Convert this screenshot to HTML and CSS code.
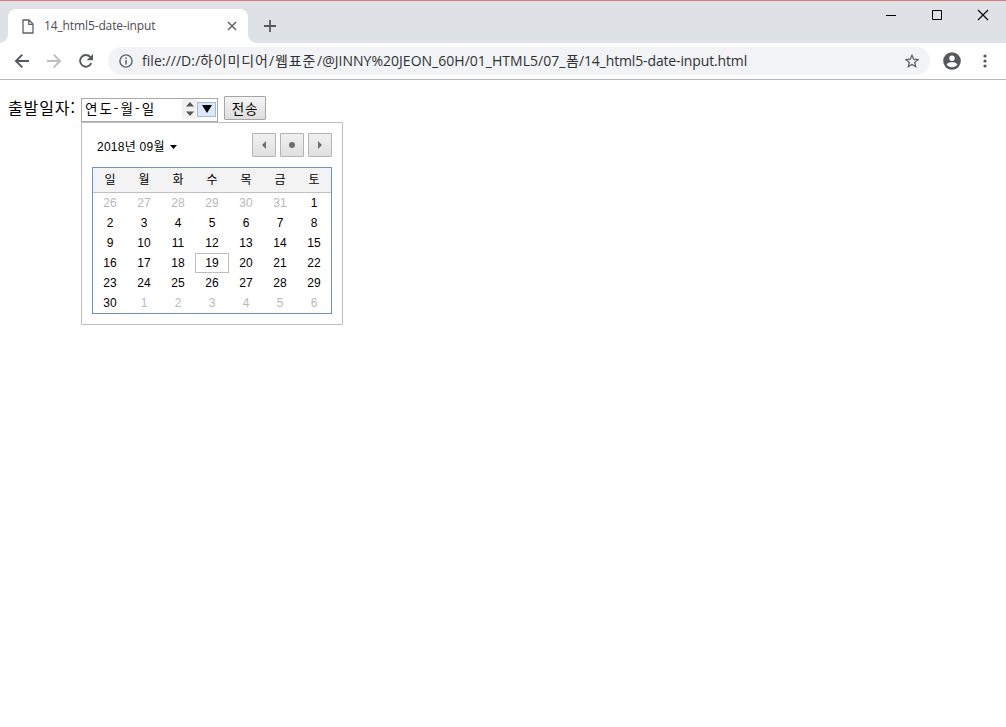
FILE: index.html
```html
<!DOCTYPE html>
<html lang="ko">
<head>
<meta charset="utf-8">
<title>14_html5-date-input</title>
<link rel="stylesheet" href="styles.css">
</head>
<body>
<div class="browser">
  <header class="tabstrip">
    <div class="tab">
      <svg class="tab-icon" width="12" height="15" viewBox="0 0 12 15" fill="none" stroke="#5f6368" stroke-width="1.3"><path d="M1 1h6l4 4v9H1zM6.8 1v4.3H11"/></svg>
      <span class="tab-title">14_html5-date-input</span>
      <svg class="tab-close" width="10" height="10" viewBox="0 0 10 10" stroke="#5f6368" stroke-width="1.5"><path d="M1 1l8 8M9 1L1 9"/></svg>
    </div>
    <svg class="new-tab" width="12" height="12" viewBox="0 0 12 12" stroke="#55595e" stroke-width="1.8"><path d="M6 0v12M0 6h12"/></svg>
    <div class="window-controls">
      <svg width="46" height="29" viewBox="0 0 46 29" stroke="#000"><path d="M18 14.5h10"/></svg>
      <svg width="46" height="29" viewBox="0 0 46 29" fill="none" stroke="#000"><path d="M18.5 9.5h9v9h-9z"/></svg>
      <svg width="46" height="29" viewBox="0 0 46 29" stroke="#000" stroke-width="1.1"><path d="M18 9l10 10M28 9L18 19"/></svg>
    </div>
  </header>
  <nav class="toolbar">
    <svg class="nav-icon" width="16" height="16" viewBox="0 0 16 16" fill="none" stroke="#55595e" stroke-width="1.9"><path d="M15 8H2.3M8.3 1.6L1.9 8l6.4 6.4"/></svg>
    <svg class="nav-icon" width="16" height="16" viewBox="0 0 16 16" fill="none" stroke="#bcbec1" stroke-width="1.9"><path d="M1 8h12.7M7.7 1.6L14.1 8l-6.4 6.4"/></svg>
    <svg class="nav-icon" width="16" height="16" viewBox="0 0 16 16"><path d="M13.2 10.2A5.8 5.8 0 1 1 12.3 4.1" fill="none" stroke="#55595e" stroke-width="1.9"/><path d="M15 1v6.3H8.7z" fill="#55595e"/></svg>
    <div class="omnibox">
      <svg width="14" height="14" viewBox="0 0 14 14"><circle cx="7" cy="7" r="6.1" fill="none" stroke="#5f6368" stroke-width="1.4"/><path d="M6.3 3.4h1.5v1.5H6.3zM6.3 6.1h1.5v4.5H6.3z" fill="#5f6368"/></svg>
      <div class="url"><span class="u-scheme">file:///D:/</span><span class="u-folder">하이미디어</span><span class="u-slash">/</span><span class="u-topic">웹표준</span><span class="u-path">/@JINNY%20JEON_60H/01_HTML5/07_</span><span class="u-form">폼</span><span class="u-file">/14_html5-date-input.html</span></div>
      <svg class="star" width="14" height="14" viewBox="0 0 14 14" fill="none" stroke="#5f6368" stroke-width="1.3"><path d="M7 1.3l1.7 3.9 4.2.4-3.2 2.8 1 4.2L7 10.4l-3.7 2.2 1-4.2L1.1 5.6l4.2-.4z"/></svg>
    </div>
    <svg class="avatar" width="18" height="18" viewBox="0 0 18 18"><circle cx="9" cy="9" r="8.8" fill="#55595e"/><circle cx="9" cy="6.2" r="2.7" fill="#fff"/><path d="M3.7 12.4C4.2 10.9 7 10.3 9 10.3s4.8.6 5.3 2.1C13.200 14.100 11.300 15.200 9 15.200s-4.200-1.100-5.300-2.800z" fill="#fff"/></svg>
    <svg class="kebab" width="4" height="14" viewBox="0 0 4 14" fill="#55595e"><circle cx="2" cy="2" r="1.6"/><circle cx="2" cy="7" r="1.6"/><circle cx="2" cy="12" r="1.6"/></svg>
  </nav>
  <main class="page">
    <form class="form">
      <label class="label">출발일자:</label>
      <div class="date-field">
        <span class="date-text">연도-월-일</span>
        <span class="spinner"><svg width="8" height="14" viewBox="0 0 8 14" fill="#555"><path d="M0 4.500L4 0l4 4.500zM0 9.500h8L4 14z"/></svg></span>
        <span class="dropdown"><svg width="10" height="8" viewBox="0 0 10 8"><path d="M0 0h10L5 8z"/></svg></span>
        <div class="picker">
          <div class="picker-head">
            <span class="month">2018년 09월</span>
            <svg class="caret" width="7" height="4" viewBox="0 0 7 4"><path d="M0 0h7L3.500 4z"/></svg>
            <div class="steps">
              <span class="step"><svg width="6" height="8" viewBox="0 0 6 8" fill="#6e6e6e"><path d="M5 0v8L1 4z"/></svg></span>
              <span class="step"><svg width="6" height="6" viewBox="0 0 6 6" fill="#6e6e6e"><circle cx="3" cy="3" r="3"/></svg></span>
              <span class="step"><svg width="6" height="8" viewBox="0 0 6 8" fill="#6e6e6e"><path d="M1 0v8l4-4z"/></svg></span>
            </div>
          </div>
          <div class="calendar">
            <div class="weekdays"><span>일</span><span>월</span><span>화</span><span>수</span><span>목</span><span>금</span><span>토</span></div>
            <div class="days">
              <span class="other">26</span><span class="other">27</span><span class="other">28</span><span class="other">29</span><span class="other">30</span><span class="other">31</span><span>1</span>
              <span>2</span><span>3</span><span>4</span><span>5</span><span>6</span><span>7</span><span>8</span>
              <span>9</span><span>10</span><span>11</span><span>12</span><span>13</span><span>14</span><span>15</span>
              <span>16</span><span>17</span><span>18</span><span class="today">19</span><span>20</span><span>21</span><span>22</span>
              <span>23</span><span>24</span><span>25</span><span>26</span><span>27</span><span>28</span><span>29</span>
              <span>30</span><span class="other">1</span><span class="other">2</span><span class="other">3</span><span class="other">4</span><span class="other">5</span><span class="other">6</span>
            </div>
          </div>
        </div>
      </div>
      <button class="submit" type="button">전송</button>
    </form>
  </main>
</div>
</body>
</html>
```
FILE: styles.css
```css
* { box-sizing: border-box; }
body { margin: 0; background: #fff; color: #000; font-family: "Liberation Sans", "Noto Sans CJK KR", sans-serif; }
svg { display: block; flex: none; }
.browser { width: 1006px; height: 727px; overflow: hidden; }

.tabstrip { height: 43px; display: flex; background: #dee1e6; border-top: 1px solid #d9787b; padding-left: 8px; }
.tab { position: relative; width: 240px; height: 34px; margin-top: 8px; padding: 0 11px 0 14px; display: flex; align-items: center; background: #fff; border-radius: 8px 8px 0 0; }
.tab::before, .tab::after { content: ""; position: absolute; bottom: 0; width: 8px; height: 8px; }
.tab::before { left: -8px; background: radial-gradient(circle at 0 0, transparent 7.5px, #fff 8px); }
.tab::after { right: -8px; background: radial-gradient(circle at 100% 0, transparent 7.5px, #fff 8px); }
.tab-title { margin-left: 10px; font: 12px/16px "Open Sans", sans-serif; letter-spacing: -0.12px; color: #4a4d51; white-space: nowrap; }
.tab-close { margin-left: auto; }
.new-tab { margin: 19px 0 0 16px; }
.window-controls { display: flex; margin-left: auto; }

.toolbar { height: 37px; display: flex; align-items: center; padding: 0 19px 0 14px; border-bottom: 1px solid #b4b6b9; }
.nav-icon { margin-right: 16px; }
.omnibox { width: 822px; height: 28px; margin-left: -2px; padding: 0 11px; display: flex; align-items: center; background: #f1f3f4; border-radius: 14px; }
.url { display: flex; margin-left: 9px; font: 14px/20px "Open Sans", "Noto Sans CJK KR", sans-serif; color: #303236; white-space: nowrap; }
.url span { flex: none; }
.u-scheme { width: 58px; letter-spacing: 0.05px; }
.u-folder { width: 69px; letter-spacing: 0.9px; }
.u-slash { width: 6px; }
.u-topic { width: 42px; letter-spacing: 0.9px; }
.u-path { width: 249px; letter-spacing: 0.02px; }
.u-form { width: 13px; }
.u-file { width: 168px; letter-spacing: -0.14px; }
.star { margin-left: auto; }
.avatar { margin-left: 13px; }
.kebab { margin-left: auto; }

.page { padding: 16px 8px; }
.form { display: flex; align-items: flex-start; }
.label { width: 73px; margin-top: -1px; font: 16px/24px "Noto Sans CJK KR", sans-serif; letter-spacing: 0.9px; white-space: nowrap; }
.date-field { position: relative; width: 137px; height: 24px; margin-top: 2px; padding: 0 1px 2px 3px; display: flex; align-items: center; border: 1px solid #a9a9a9; background: #fff; }
.date-text { padding-bottom: 2px; font: 13.5px/18px "Noto Sans CJK KR", sans-serif; letter-spacing: 2px; white-space: nowrap; }
.spinner { width: 15px; height: 20px; margin-left: auto; display: flex; align-items: center; justify-content: center; background: #f1f1f1; }
.dropdown { width: 19px; height: 15px; display: flex; align-items: center; justify-content: center; background: #dce9f9; border: 1px solid #9ebbe3; }
.submit { width: 42px; height: 24px; margin-left: 6px; padding: 0 0 1px; font: 13.5px/20px "Noto Sans CJK KR", sans-serif; letter-spacing: 0.8px; color: #000; border: 1px solid #a6a6a6; border-radius: 1px; background: linear-gradient(#f4f4f4, #dedede); }

.picker { position: absolute; top: 23px; left: -1px; z-index: 1; width: 262px; height: 203px; padding: 10px; background: #fff; border: 1px solid #bfbfbf; border-radius: 0 1px 1px 1px; }
.picker-head { height: 24px; margin-bottom: 10px; padding-left: 5px; display: flex; align-items: center; }
.month { padding-top: 4px; font-size: 12px; line-height: 18px; letter-spacing: 0.25px; white-space: nowrap; }
.caret { margin: 3px 0 0 5px; }
.steps { display: flex; gap: 4px; margin-left: auto; }
.step { width: 24px; height: 24px; display: flex; align-items: center; justify-content: center; border: 1px solid #b3b3b3; border-radius: 1px; background: linear-gradient(#f0f0f0, #e0e0e0); }
.calendar { width: 240px; height: 147px; border: 1px solid #6c93c7; font-size: 12px; }
.weekdays, .days { display: grid; grid-template-columns: repeat(7, 34px); text-align: center; }
.weekdays { height: 25px; line-height: 25px; background: #f3f3f3; border-bottom: 1px solid #c0c0c0; }
.days { grid-auto-rows: 20px; line-height: 20px; }
.other { color: #b9b9b9; }
.today { border: 1px solid #bfbfbf; line-height: 18px; }
```
